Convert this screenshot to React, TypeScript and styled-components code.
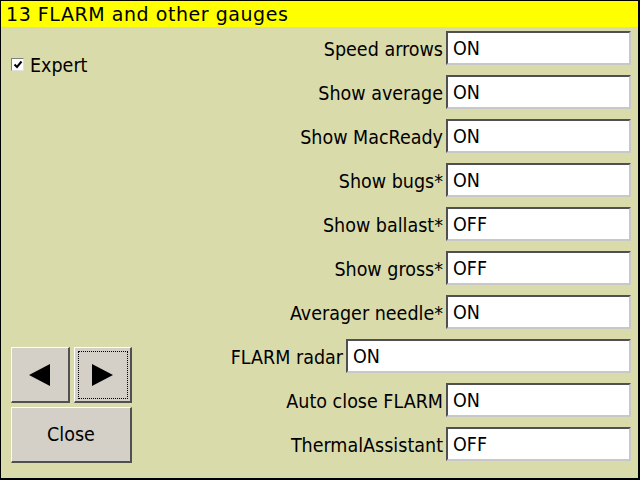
import React from 'react'
import styled, { createGlobalStyle } from 'styled-components'

const GlobalStyle = createGlobalStyle`
  html, body {
    margin: 0;
    padding: 0;
    background: #dadbab;
  }
  * {
    box-sizing: border-box;
  }
`

interface Setting {
  label: string
  value: string
  wide?: boolean
}

const settings: Setting[] = [
  { label: 'Speed arrows', value: 'ON' },
  { label: 'Show average', value: 'ON' },
  { label: 'Show MacReady', value: 'ON' },
  { label: 'Show bugs*', value: 'ON' },
  { label: 'Show ballast*', value: 'OFF' },
  { label: 'Show gross*', value: 'OFF' },
  { label: 'Averager needle*', value: 'ON' },
  { label: 'FLARM radar', value: 'ON', wide: true },
  { label: 'Auto close FLARM', value: 'ON' },
  { label: 'ThermalAssistant', value: 'OFF' },
]

const App: React.FC = () => {
  return (
    <>
      <GlobalStyle />
      <Frame>
        <TitleBar>13 FLARM and other gauges</TitleBar>
        <Body>
          <LeftColumn>
            <CheckRow>
              <CheckBox>
                <svg width="10" height="10" viewBox="0 0 10 10">
                  <path d="M1.5 4.5 L4 7 L8.5 1.5" stroke="#000" strokeWidth="2" fill="none" />
                </svg>
              </CheckBox>
              <CheckLabel>Expert</CheckLabel>
            </CheckRow>
            <ButtonGroup>
              <ArrowRow>
                <ArrowButton>
                  <svg width="24" height="22" viewBox="0 0 24 22">
                    <polygon points="1,11 22,0 22,22" fill="#000" />
                  </svg>
                </ArrowButton>
                <ArrowButton focused>
                  <svg width="24" height="22" viewBox="0 0 24 22">
                    <polygon points="2,0 23,11 2,22" fill="#000" />
                  </svg>
                </ArrowButton>
              </ArrowRow>
              <CloseButton>Close</CloseButton>
            </ButtonGroup>
          </LeftColumn>
          <RightColumn>
            {settings.map((s) => (
              <Row key={s.label}>
                <Label>{s.label}</Label>
                <ValueBox wide={s.wide}>{s.value}</ValueBox>
              </Row>
            ))}
          </RightColumn>
        </Body>
      </Frame>
    </>
  )
}

const Frame = styled.div`
  width: 640px;
  height: 480px;
  display: flex;
  flex-direction: column;
  background: #dadbab;
  border-top: 1px solid #000;
  border-left: 1px solid #000;
  border-right: 2px solid #000;
  border-bottom: 2px solid #000;
  font-family: 'DejaVu Sans Condensed', 'DejaVu Sans', sans-serif;
  color: #000;
`

const TitleBar = styled.div`
  height: 26px;
  background: #ffff00;
  font-family: 'DejaVu Sans', sans-serif;
  font-size: 19px;
  letter-spacing: 0.55px;
  line-height: 27px;
  padding-left: 5px;
  white-space: nowrap;
`

const Body = styled.div`
  flex: 1;
  display: flex;
  padding: 4px 7px 0 10px;
`

const LeftColumn = styled.div`
  width: 121px;
  display: flex;
  flex-direction: column;
  justify-content: space-between;
  padding-bottom: 15px;
`

const CheckRow = styled.div`
  display: flex;
  align-items: center;
  gap: 6px;
  margin-top: 21px;
`

const CheckBox = styled.div`
  width: 13px;
  height: 13px;
  background: #fff;
  border-top: 1px solid #808080;
  border-left: 1px solid #808080;
  border-right: 1px solid #e0e0e0;
  border-bottom: 1px solid #e0e0e0;
  display: flex;
  align-items: center;
  justify-content: center;
`

const CheckLabel = styled.span`
  font-size: 19.5px;
  padding-top: 2px;
`

const ButtonGroup = styled.div`
  display: flex;
  flex-direction: column;
  gap: 4px;
`

const ArrowRow = styled.div`
  display: flex;
  gap: 4px;
`

const ButtonFace = styled.div`
  height: 56px;
  background: #d4d0c8;
  border-top: 1px solid #fff;
  border-left: 1px solid #fff;
  border-right: 2px solid #505050;
  border-bottom: 2px solid #505050;
  display: flex;
  align-items: center;
  justify-content: center;
  font-size: 19.5px;
`

const ArrowButton = styled(ButtonFace)<{ focused?: boolean }>`
  flex: 1;
  outline: ${(p) => (p.focused ? '1px dotted #000' : 'none')};
  outline-offset: -5px;
`

const CloseButton = styled(ButtonFace)`
  width: 100%;
`

const RightColumn = styled.div`
  flex: 1;
  display: flex;
  flex-direction: column;
  gap: 10px;
`

const Row = styled.div`
  height: 34px;
  display: flex;
  justify-content: flex-end;
  align-items: center;
  gap: 3px;
`

const Label = styled.span`
  font-size: 19.5px;
  white-space: nowrap;
  padding-top: 3px;
`

const ValueBox = styled.div<{ wide?: boolean }>`
  width: ${(p) => (p.wide ? '285px' : '185px')};
  height: 34px;
  background: #fff;
  border-top: 2px solid #505050;
  border-left: 2px solid #505050;
  border-right: 2px solid #c8c8c8;
  border-bottom: 2px solid #c8c8c8;
  padding-left: 5px;
  display: flex;
  align-items: center;
  font-size: 19.5px;
  padding-top: 1px;
`

export default App
